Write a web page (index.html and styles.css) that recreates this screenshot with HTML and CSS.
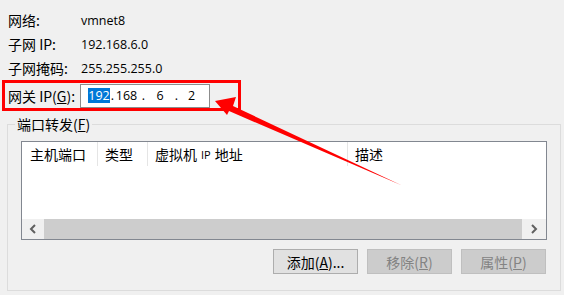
FILE: index.html
```html
<!DOCTYPE html>
<html lang="zh-CN">
<head>
  <meta charset="UTF-8">
  <title>虚拟网络编辑器 - NAT 设置</title>
  <link rel="stylesheet" href="styles.css">
</head>
<body>
  <div class="dialog">
    <div class="row"><span class="label">网络:</span><span class="val">vmnet8</span></div>
    <div class="row"><span class="label">子网 IP:</span><span class="val">192.168.6.0</span></div>
    <div class="row"><span class="label">子网掩码:</span><span class="val">255.255.255.0</span></div>

    <div class="row gateway">
      <span class="label">网关 IP(<u>G</u>):</span>
      <div class="ipbox">
        <span class="oct sel">192</span><span class="dot">.</span><span class="oct o2">168</span><span class="dot d2">.</span><span class="oct o3">6</span><span class="dot">.</span><span class="oct o4">2</span>
      </div>
    </div>

    <fieldset class="group">
      <legend>端口转发(<u>F</u>)</legend>
      <div class="list">
        <div class="list-head">
          <div class="col c1">主机端口</div>
          <div class="col c2">类型</div>
          <div class="col c3">虚拟机 <span class="small">IP</span> 地址</div>
          <div class="col c4">描述</div>
        </div>
        <div class="list-body"></div>
        <div class="hscroll">
          <div class="sb-arrow">
            <svg width="8" height="10" viewBox="0 0 8 10"><polyline points="6,1 2,5 6,9" fill="none" stroke="#606060" stroke-width="2"/></svg>
          </div>
          <div class="thumb"></div>
          <div class="sb-arrow right">
            <svg width="8" height="10" viewBox="0 0 8 10"><polyline points="2,1 6,5 2,9" fill="none" stroke="#606060" stroke-width="2"/></svg>
          </div>
        </div>
      </div>
      <div class="buttons">
        <button class="btn">添加(<u>A</u>)...</button>
        <button class="btn" disabled>移除(<u>R</u>)</button>
        <button class="btn" disabled>属性(<u>P</u>)</button>
      </div>
    </fieldset>
  </div>

  <!-- annotation arrow drawn over the dialog -->
  <svg class="annot" width="564" height="295" viewBox="0 0 564 295">
    <polygon points="215,101 236,97 233,106 402,185.5 229,111 227,115" fill="#ff0000"/>
  </svg>
</body>
</html>
```

FILE: styles.css
```css
body {
  margin: 0;
  background-color: #f0f0f0;
  font-family: "Noto Sans CJK SC", "Open Sans", sans-serif;
  font-size: 14px;
  color: #000;
  width: 564px;
  height: 295px;
  overflow: hidden;
  position: relative;
}
.dialog {
  padding-top: 8px;
}
.row {
  display: flex;
  align-items: center;
  height: 24px;
  padding-left: 8px;
}
.row:nth-child(3) {
  height: 24px;
}
.label {
  width: 73px;
  flex: none;
  line-height: 16px;
}
.val {
  font-family: "Open Sans", sans-serif;
  font-size: 12.5px;
}
.gateway {
  box-sizing: border-box;
  width: 239px;
  height: 31px;
  margin-left: 2px;
  padding-left: 3px;
  border: 3px solid #ff0000;
}
.gateway .label {
  width: 72px;
}
.ipbox {
  box-sizing: border-box;
  width: 130px;
  height: 24px;
  border: 1px solid #8c8c8c;
  background-color: #fff;
  display: flex;
  align-items: center;
  padding-left: 7px;
  font-family: "Open Sans", sans-serif;
  font-size: 12.5px;
}
.oct,
.dot {
  display: inline-block;
  text-align: center;
  line-height: 15px;
}
.sel {
  width: 22px;
  background-color: #0078d7;
  color: #fff;
}
.dot {
  width: 5px;
}
.d2 {
  margin-left: 3px;
}
.o2 {
  width: 23px;
}
.o3 {
  width: 28px;
}
.o4 {
  width: 25px;
}
.group {
  box-sizing: border-box;
  width: 554px;
  margin: 5px 0 0 7px;
  padding: 9px 13px 16px 13px;
  border: 1px solid #dcdcdc;
  min-width: 0;
}
.group legend {
  padding: 0 2px;
  margin-left: -6px;
  line-height: 16px;
}
.list {
  box-sizing: border-box;
  height: 99px;
  border: 1px solid #828790;
  background-color: #fff;
  display: flex;
  flex-direction: column;
}
.list-head {
  display: flex;
  height: 24px;
  flex: none;
}
.col {
  box-sizing: border-box;
  padding-left: 7px;
  display: flex;
  align-items: center;
  border-right: 1px solid #e5e5e5;
}
.c1 {
  width: 76px;
  padding-left: 8px;
}
.c2 {
  width: 50px;
}
.c3 {
  width: 200px;
}
.c4 {
  flex: 1;
  border-right: none;
}
.small {
  font-family: "Open Sans", sans-serif;
  font-size: 11px;
  margin: 0 4px;
}
.list-body {
  flex: 1;
}
.hscroll {
  height: 20px;
  flex: none;
  display: flex;
  background-color: #f0f0f0;
}
.sb-arrow {
  width: 22px;
  display: flex;
  align-items: center;
  justify-content: center;
}
.sb-arrow.right {
  width: 24px;
}
.thumb {
  flex: 1;
  background-color: #cdcdcd;
}
.buttons {
  display: flex;
  justify-content: flex-end;
  gap: 9px;
  margin-top: 9px;
  padding-right: 1px;
}
.btn {
  box-sizing: border-box;
  width: 85px;
  height: 25px;
  padding: 0;
  font-family: "Noto Sans CJK SC", "Open Sans", sans-serif;
  font-size: 14px;
  color: #000;
  background-color: #e1e1e1;
  border: 1px solid #adadad;
  border-radius: 0;
}
.btn:disabled {
  color: #838383;
  background-color: #cccccc;
  border-color: #bfbfbf;
}
.annot {
  position: absolute;
  left: 0;
  top: 0;
  pointer-events: none;
}
```
